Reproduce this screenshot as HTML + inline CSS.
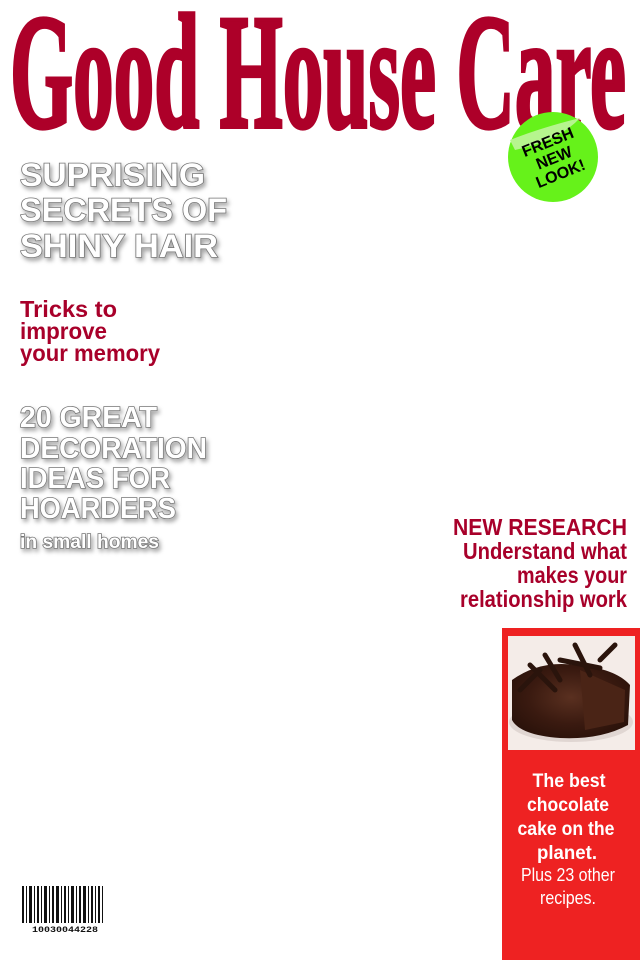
<!DOCTYPE html>
<html><head><meta charset="utf-8"><style>
html,body{margin:0;padding:0;background:#fff;width:640px;height:960px;overflow:hidden}
svg{display:block}
.o{font-family:"Liberation Sans",sans-serif;font-weight:bold;fill:#fff;stroke:#777;stroke-width:1.6px;paint-order:stroke;filter:url(#sh)}
.r{font-family:"Liberation Sans",sans-serif;font-weight:bold;fill:#a8002a}
.w{font-family:"Liberation Sans",sans-serif;fill:#fff;text-anchor:middle}
</style></head><body>
<svg width="640" height="960" viewBox="0 0 640 960">
<defs>
<filter id="sh" x="-5%" y="-20%" width="115%" height="160%"><feDropShadow dx="2" dy="3" stdDeviation="2" flood-color="#000" flood-opacity="0.35"/></filter>
<radialGradient id="cake" cx="50%" cy="45%" r="60%"><stop offset="0" stop-color="#5a3020"/><stop offset="0.6" stop-color="#3a1a10"/><stop offset="1" stop-color="#2a120a"/></radialGradient>
</defs>
<text x="10" y="127" font-family="Liberation Serif,serif" font-weight="bold" font-size="164" fill="#ad0029" stroke="#ad0029" stroke-width="4" textLength="616" lengthAdjust="spacingAndGlyphs">Good House Care</text>
<!-- sticker -->
<g>
<circle cx="553" cy="157" r="45" fill="#66f21a"/>
<path d="M510 140 Q540 128 580 118 Q560 140 515 150 Z" fill="#b6f58e"/>
<g transform="rotate(-22 555 160)" font-family="Liberation Sans,sans-serif" font-weight="bold" font-size="16" text-anchor="middle" fill="#000">
<text x="555" y="146">FRESH</text><text x="555" y="163">NEW</text><text x="555" y="180">LOOK!</text></g>
</g>
<text class="o" x="20" y="186" font-size="32" textLength="185" lengthAdjust="spacingAndGlyphs">SUPRISING</text>
<text class="o" x="20" y="221" font-size="32" textLength="207" lengthAdjust="spacingAndGlyphs">SECRETS OF</text>
<text class="o" x="20" y="257" font-size="32" textLength="198" lengthAdjust="spacingAndGlyphs">SHINY HAIR</text>
<text class="r" x="20" y="317" font-size="23" textLength="97" lengthAdjust="spacingAndGlyphs">Tricks to</text>
<text class="r" x="20" y="339" font-size="23" textLength="87" lengthAdjust="spacingAndGlyphs">improve</text>
<text class="r" x="20" y="361" font-size="23" textLength="140" lengthAdjust="spacingAndGlyphs">your memory</text>
<text class="o" x="20" y="427" font-size="29" textLength="137" lengthAdjust="spacingAndGlyphs">20 GREAT</text>
<text class="o" x="20" y="458" font-size="29" textLength="187" lengthAdjust="spacingAndGlyphs">DECORATION</text>
<text class="o" x="20" y="488" font-size="29" textLength="150" lengthAdjust="spacingAndGlyphs">IDEAS FOR</text>
<text class="o" x="20" y="518" font-size="29" textLength="156" lengthAdjust="spacingAndGlyphs">HOARDERS</text>
<text class="o" x="20" y="548" font-size="19" stroke-width="1.2" textLength="139" lengthAdjust="spacingAndGlyphs">in small homes</text>
<text class="r" x="453" y="535" font-size="23" textLength="174" lengthAdjust="spacingAndGlyphs">NEW RESEARCH</text>
<text class="r" x="463" y="559" font-size="23" textLength="164" lengthAdjust="spacingAndGlyphs">Understand what</text>
<text class="r" x="517" y="583" font-size="23" textLength="110" lengthAdjust="spacingAndGlyphs">makes your</text>
<text class="r" x="460" y="607" font-size="23" textLength="167" lengthAdjust="spacingAndGlyphs">relationship work</text>
<rect x="502" y="628" width="138" height="332" fill="#ee2222"/>
<rect x="508" y="636" width="127" height="114" fill="#f4ece8"/>
<ellipse cx="571" cy="722" rx="62" ry="20" fill="#e0d6d2"/>
<path d="M512 680 Q540 660 575 665 Q615 668 630 685 L628 725 Q600 740 560 738 Q520 735 512 720 Z" fill="url(#cake)"/>
<path d="M580 670 L625 690 L624 722 L585 730 Z" fill="#4a2416"/>
<g stroke="#2a140c" stroke-width="5" stroke-linecap="round">
<line x1="530" y1="665" x2="555" y2="690"/><line x1="545" y1="655" x2="560" y2="680"/><line x1="575" y1="645" x2="590" y2="675"/><line x1="600" y1="660" x2="615" y2="645"/><line x1="520" y1="690" x2="540" y2="670"/><line x1="560" y1="660" x2="600" y2="668"/>
</g>
<text class="w" x="569" y="787" font-size="19" font-weight="bold" textLength="73" lengthAdjust="spacingAndGlyphs">The best</text>
<text class="w" x="568" y="811" font-size="19" font-weight="bold" textLength="82" lengthAdjust="spacingAndGlyphs">chocolate</text>
<text class="w" x="566" y="835" font-size="19" font-weight="bold" textLength="97" lengthAdjust="spacingAndGlyphs">cake on the</text>
<text class="w" x="567" y="859" font-size="19" font-weight="bold" textLength="60" lengthAdjust="spacingAndGlyphs">planet.</text>
<text class="w" x="568" y="881" font-size="18" textLength="94" lengthAdjust="spacingAndGlyphs">Plus 23 other</text>
<text class="w" x="568" y="904" font-size="18" textLength="56" lengthAdjust="spacingAndGlyphs">recipes.</text>
<g fill="#111">
<rect x="22" y="886" width="2" height="37"/><rect x="26" y="886" width="1" height="37"/><rect x="29" y="886" width="3" height="37"/><rect x="34" y="886" width="1" height="37"/><rect x="37" y="886" width="2" height="37"/><rect x="41" y="886" width="1" height="37"/><rect x="44" y="886" width="3" height="37"/><rect x="49" y="886" width="1" height="37"/><rect x="52" y="886" width="2" height="37"/><rect x="56" y="886" width="3" height="37"/><rect x="61" y="886" width="1" height="37"/><rect x="64" y="886" width="2" height="37"/><rect x="68" y="886" width="1" height="37"/><rect x="71" y="886" width="3" height="37"/><rect x="76" y="886" width="1" height="37"/><rect x="79" y="886" width="2" height="37"/><rect x="83" y="886" width="3" height="37"/><rect x="88" y="886" width="1" height="37"/><rect x="91" y="886" width="2" height="37"/><rect x="95" y="886" width="1" height="37"/><rect x="98" y="886" width="2" height="37"/><rect x="102" y="886" width="1" height="37"/>
</g>
<text x="32" y="932" font-family="Liberation Mono,monospace" font-weight="bold" font-size="8" fill="#111" textLength="66" lengthAdjust="spacingAndGlyphs">10030044228</text>
</svg>
</body></html>
